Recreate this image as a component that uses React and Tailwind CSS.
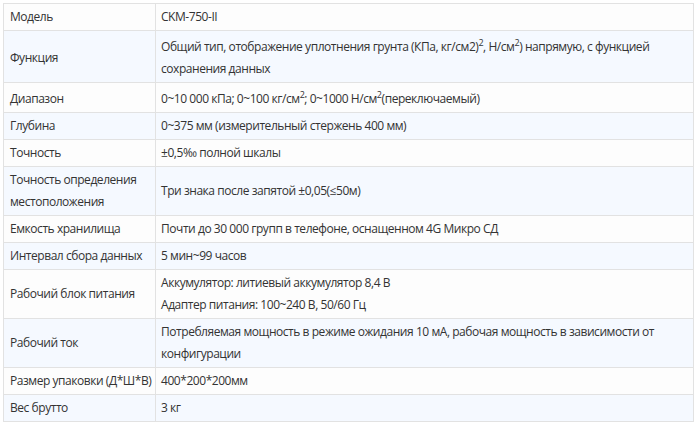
import React from "react";

const rows = [
  ["Модель", <>CKM-750-II</>],
  [
    "Функция",
    <>
      Общий тип, отображение уплотнения грунта (КПа, кг/см2)<sup>2</sup>, Н/см<sup>2</sup>) напрямую, с функцией сохранения данных
    </>,
    true,
  ],
  [
    "Диапазон",
    <>
      0~10 000 кПа; 0~100 кг/см<sup>2</sup>; 0~1000 Н/см<sup>2</sup>(переключаемый)
    </>,
    true,
  ],
  ["Глубина", <>0~375 мм (измерительный стержень 400 мм)</>],
  ["Точность", <>±0,5‰ полной шкалы</>],
  ["Точность определения местоположения", <>Три знака после запятой ±0,05(≤50м)</>],
  ["Емкость хранилища", <>Почти до 30 000 групп в телефоне, оснащенном 4G Микро СД</>],
  ["Интервал сбора данных", <>5 мин~99 часов</>],
  [
    "Рабочий блок питания",
    <>
      Аккумулятор: литиевый аккумулятор 8,4 В
      <br />
      Адаптер питания: 100~240 В, 50/60 Гц
    </>,
  ],
  [
    "Рабочий ток",
    <>Потребляемая мощность в режиме ожидания 10 мА, рабочая мощность в зависимости от конфигурации</>,
  ],
  ["Размер упаковки (Д*Ш*В)", <>400*200*200мм</>],
  ["Вес брутто", <>3 кг</>],
];

export default function App() {
  return (
    <div className="w-[698px] h-[423px] bg-white pt-[3px] pl-[3px] overflow-hidden">
      <table
        className="w-[691px] table-fixed border-collapse text-[12px] leading-[22px] tracking-[-0.45px] text-[#333] [&_sup]:text-[9px] [&_sup]:align-super [&_sup]:top-0 [&_sup]:leading-none"
        style={{ fontFamily: '"Open Sans", "Noto Sans", sans-serif' }}
      >
        <colgroup>
          <col className="w-[152px]" />
          <col />
        </colgroup>
        <tbody>
          {rows.map(([k, v, hasSup], i) => (
            <tr key={i} className={i % 2 === 0 ? "bg-[#fdfdfd]" : "bg-[#f5f9ff]"}>
              <td className={"border border-[#e2e2e2] pl-[6px] pr-0 align-middle " + (hasSup ? "pt-[5px] pb-[2px]" : "py-[2px]")}>{k}</td>
              <td className={"border border-[#e2e2e2] px-[5px] align-middle " + (hasSup ? "pt-[5px] pb-[2px]" : "py-[2px]")}>{v}</td>
            </tr>
          ))}
        </tbody>
      </table>
    </div>
  );
}
